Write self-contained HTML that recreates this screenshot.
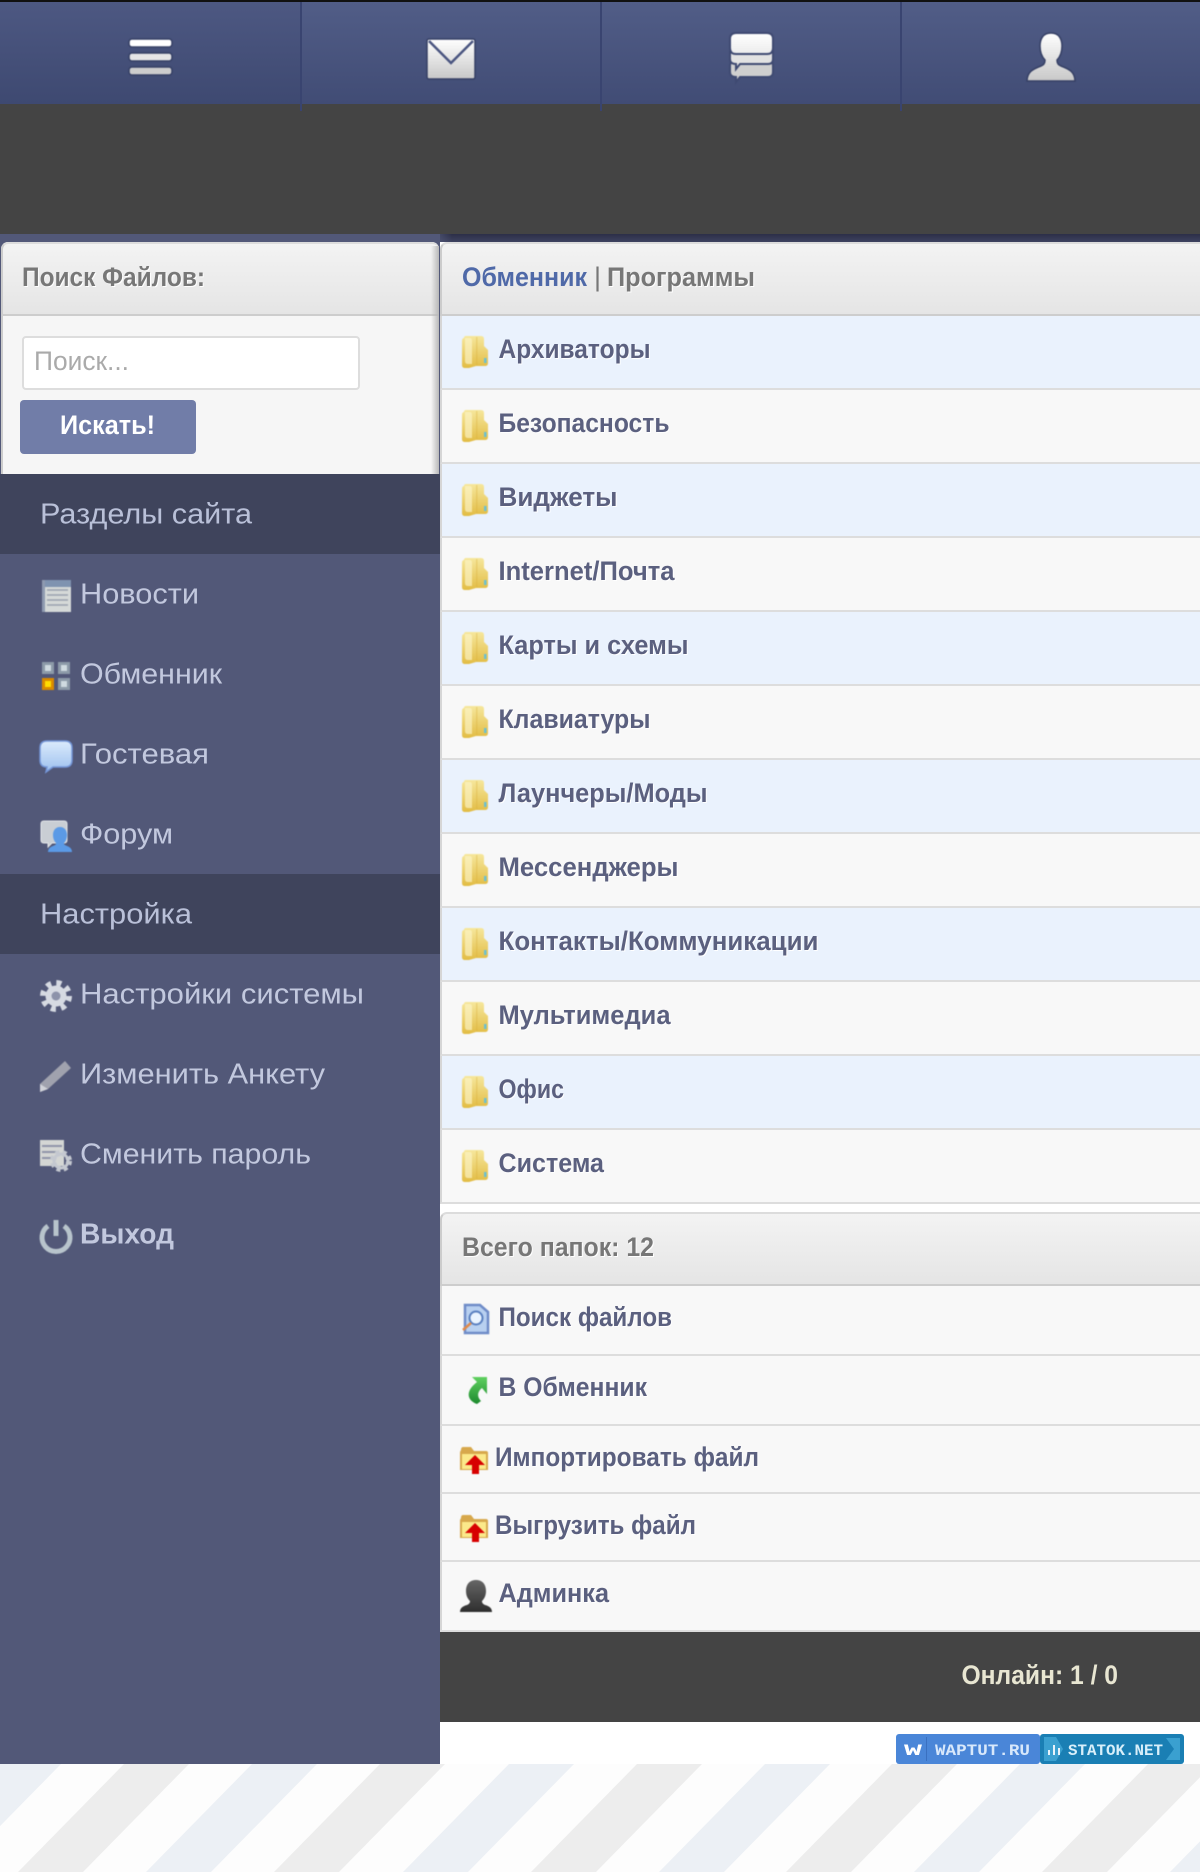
<!DOCTYPE html>
<html><head><meta charset="utf-8"><title>Обменник</title>
<style>
html,body{margin:0;padding:0;background:#fff}
#p{position:relative;width:1200px;height:1872px;overflow:hidden;background:#fff;font-family:"Liberation Sans","Noto Sans CJK SC",sans-serif}
#p div{position:absolute;box-sizing:border-box}
.hd{top:2px;height:102px;background:linear-gradient(#515d87,#414c75)}
.dv{top:2px;width:2px;height:109px;background:#394470}
.ph{background:linear-gradient(#f3f3f3,#e5e5e5);border-top:2px solid #dcdcdc;border-bottom:2px solid #cdcdcd;border-left:2px solid #ccc;border-radius:7px 0 0 0}
.r{left:440px;width:760px;border-left:2px solid #d6d6d6;border-bottom:2px solid #ddd}
.a{background:#eaf2fd}.b{background:#f8f8f8}
svg text{font-family:"Liberation Sans","Noto Sans CJK SC",sans-serif}
.m{font-size:28.5px;fill:#c2c8de}
.s{font-size:28.5px;fill:#b9c0d8}
.t{font-size:27px;font-weight:700;fill:#5b607f;text-shadow:1px 1px 0 #fff}
.g{font-size:27px;font-weight:700;fill:#777;text-shadow:1px 1px 0 #fff}
.ic{filter:blur(.55px)}
</style></head><body>
<div id="p">
<div style="left:0;top:0;width:1200px;height:2px;background:#111"></div>
<div class="hd" style="left:0;width:301px;background:linear-gradient(#4d5882,#3e4971)"></div>
<div class="hd" style="left:301px;width:300px"></div>
<div class="hd" style="left:601px;width:300px"></div>
<div class="hd" style="left:901px;width:299px"></div>
<div style="left:0;top:104px;width:1200px;height:130px;background:#444"></div>
<div class="dv" style="left:300px"></div><div class="dv" style="left:600px"></div><div class="dv" style="left:900px"></div>
<div style="left:0;top:234px;width:440px;height:1530px;background:#525878"></div>
<div style="left:440px;top:234px;width:760px;height:8px;background:linear-gradient(#2c2f48,#3e4260)"></div>
<div style="left:432px;top:234px;width:20px;height:8px;background:linear-gradient(90deg,#525878,rgba(82,88,120,0))"></div>

<div style="left:1px;top:242px;width:438px;height:232px;background:#f6f6f6;border-left:2px solid #ccc;border-radius:7px 7px 0 0"></div>
<div class="ph" style="left:1px;top:242px;width:438px;height:74px;border-radius:7px 7px 0 0"></div>
<div style="left:431px;top:246px;width:8px;height:228px;background:linear-gradient(90deg,rgba(170,170,170,0),#b8b8b8)"></div>
<div style="left:22px;top:336px;width:338px;height:54px;background:#fff;border:2px solid #ddd;border-radius:4px"></div>
<div style="left:20px;top:400px;width:176px;height:54px;background:#717da8;border-radius:4px"></div>
<div style="left:0;top:474px;width:440px;height:80px;background:#3f445c"></div>
<div style="left:0;top:874px;width:440px;height:80px;background:#3f445c"></div>

<div style="left:440px;top:242px;width:760px;height:1390px;background:#fff"></div>
<div class="ph" style="left:440px;top:242px;width:760px;height:74px"></div>
<div class="r a" style="top:316px;height:74px"></div>
<div class="r b" style="top:390px;height:74px"></div>
<div class="r a" style="top:464px;height:74px"></div>
<div class="r b" style="top:538px;height:74px"></div>
<div class="r a" style="top:612px;height:74px"></div>
<div class="r b" style="top:686px;height:74px"></div>
<div class="r a" style="top:760px;height:74px"></div>
<div class="r b" style="top:834px;height:74px"></div>
<div class="r a" style="top:908px;height:74px"></div>
<div class="r b" style="top:982px;height:74px"></div>
<div class="r a" style="top:1056px;height:74px"></div>
<div class="r b" style="top:1130px;height:74px"></div>
<div class="ph" style="left:440px;top:1212px;width:760px;height:74px"></div>
<div class="r b" style="top:1286px;height:70px"></div>
<div class="r b" style="top:1356px;height:70px"></div>
<div class="r b" style="top:1426px;height:68px"></div>
<div class="r b" style="top:1494px;height:68px"></div>
<div class="r b" style="top:1562px;height:70px;border-bottom:0"></div>
<div style="left:440px;top:1630px;width:760px;height:2px;background:#ddd"></div>
<div style="left:440px;top:1632px;width:760px;height:90px;background:#444"></div>
<div style="left:0;top:1764px;width:1200px;height:108px;background:#fdfdfd"></div>

<svg width="1200" height="1872" viewBox="0 0 1200 1872" style="position:absolute;left:0;top:0">
<defs>
<linearGradient id="w" x1="0" y1="0" x2="0" y2="1"><stop offset="0" stop-color="#fff"/><stop offset="1" stop-color="#c8c8c8"/></linearGradient>
<linearGradient id="w1" x1="0" y1="0" x2="0" y2="1"><stop offset="0" stop-color="#fff"/><stop offset="1" stop-color="#ececec"/></linearGradient>
<linearGradient id="y" x1="0" y1="0" x2="0" y2="1"><stop offset="0" stop-color="#f6e79c"/><stop offset="1" stop-color="#e2bc44"/></linearGradient>
<linearGradient id="bb" x1="0" y1="0" x2="0" y2="1"><stop offset="0" stop-color="#dcebfc"/><stop offset="1" stop-color="#9dc0ee"/></linearGradient>
<linearGradient id="gn" x1="0" y1="0" x2="0" y2="1"><stop offset="0" stop-color="#60d060"/><stop offset="1" stop-color="#1d8a2e"/></linearGradient>
<linearGradient id="dk" x1="0" y1="0" x2="0" y2="1"><stop offset="0" stop-color="#666"/><stop offset="1" stop-color="#2e2e2e"/></linearGradient>
<symbol id="fld" viewBox="0 0 26 32"><path d="M2 2Q2 0 4 0H19Q22 0 22 3V10L26 14V27Q26 30 23 30H14L7 32H3Q0 32 0 29V5Q0 2 2 2Z" fill="url(#y)"/><path d="M3 2H8Q10 2 10 5V28H6Q3 28 3 25Z" fill="#fcf5c8" opacity=".65"/><path d="M14 1H15.5V29H14Z" fill="#d9ae3c" opacity=".35"/><rect x="22" y="22" width="2.5" height="5" fill="#6cc0d0"/></symbol>
<symbol id="upf" viewBox="0 0 28 28"><path d="M1 4Q1 1 3 1H11L14 5H26Q28 5 28 7V24H0V6Z" fill="#d7a84c"/><rect x="2" y="8" width="24" height="15" fill="#fbe98a"/><path d="M14 9L24 19H18V28H11V19H4Z" fill="#d70000" transform="translate(1 0)"/></symbol>
</defs>

<!-- stripes -->
<g fill="#ededed"><path d="M124 1764h65l-106 108h-65zM380 1764h65l-106 108h-65zM637 1764h65l-106 108h-65zM892 1764h65l-106 108h-65zM1148 1764h65l-106 108h-65z"/></g>
<g fill="#ecf0f5"><path d="M-4 1764h65l-106 108h-65zM252 1764h65l-106 108h-65zM509 1764h65l-106 108h-65zM765 1764h65l-106 108h-65zM1020 1764h65l-106 108h-65zM1276 1764h65l-106 108h-65z"/></g>

<!-- header icons -->
<g class="ic" fill="url(#w)" stroke="#364065" stroke-width="1.5">
<rect x="129" y="39" width="43" height="8" rx="3" fill="#fff"/><rect x="129" y="53" width="43" height="8" rx="3" fill="#e6e6e6"/><rect x="129" y="67" width="43" height="8" rx="3" fill="#cdcdcd"/>
<rect x="427" y="39" width="48" height="40" rx="2"/>
<path d="M429 41L451 63L473 41" fill="none" stroke="#4a5580" stroke-width="2.5"/>
<path d="M735 61h33q5 0 5 5v6q0 5-5 5H740l-4 5v-5q-6 0-6-5v-6q0-5 5-5Z" fill="#cfcfcf" stroke="#3f4a72" stroke-width="2"/>
<path d="M735 48h33q5 0 5 5v6q0 5-5 5H740l-4 5v-5q-6 0-6-5v-6q0-5 5-5Z" fill="#e2e2e2" stroke="#3f4a72" stroke-width="2"/>
<path d="M736 33h31q6 0 6 6v9q0 6-6 6H736q-6 0-6-6v-9q0-6 6-6Z" fill="url(#w1)" stroke="#3f4a72" stroke-width="2"/>
<path d="M1051 33c8 0 11 6 11 13 0 6-2 11-5 14 0 3 1 5 4 6 8 3 14 6 14 15h-48c0-9 6-12 14-15 3-1 4-3 4-6-3-3-5-8-5-14 0-7 3-13 11-13Z"/>
</g>

<!-- sidebar icons -->
<g class="ic">
<rect x="42" y="580" width="29" height="32" fill="#d5d9d8"/><rect x="42" y="580" width="29" height="7" fill="#7f93b0"/><rect x="42" y="580" width="3" height="32" fill="#8e9ab0"/>
<path d="M47 590h21M47 595h21M47 600h21M47 605h21" stroke="#9aa2ae" stroke-width="1.500"/>
<g fill="#8c9aa8"><rect x="42" y="662" width="12" height="12"/><rect x="58" y="662" width="12" height="12"/><rect x="58" y="678" width="12" height="12"/></g>
<g fill="#cfdae0"><rect x="45" y="665" width="6" height="6"/><rect x="61" y="665" width="6" height="6"/><rect x="61" y="681" width="6" height="6"/></g>
<rect x="42" y="678" width="12" height="12" fill="#d98a00"/><rect x="45" y="681" width="6" height="6" fill="#ffdc00"/>
<path d="M47 741h18q7 0 7 7v12q0 7-7 7H53l-7 5 1-5q-7 0-7-7v-12q0-7 7-7Z" fill="url(#bb)" stroke="#7496d8" stroke-width="1.500"/>
<path d="M44 821h20q3 0 3 3v16q0 3-3 3H52l-4 4v-4h-4q-3 0-3-3v-16q0-3 3-3Z" fill="#c9ced4" stroke="#e2e5e8"/>
<path d="M60 827c5 0 7 4 7 8 0 3-1 6-3 8 0 2 1 2 3 3 3 1 5 3 5 6H48c0-3 2-5 5-6 2-1 3-1 3-3-2-2-3-5-3-8 0-4 2-8 7-8Z" fill="#5b9ae6"/>
<circle cx="56" cy="996" r="10.500" fill="#d6dae2"/><circle cx="56" cy="996" r="13" fill="none" stroke="#d6dae2" stroke-width="6" stroke-dasharray="5 5.200"/><circle cx="56" cy="996" r="4.500" fill="#8d93aa"/>
<path d="M65 1061L71 1068 48 1089 40 1092V1084Z" fill="#a0a2ae"/><path d="M40 1084L48 1089 40 1092Z" fill="#d0d2d8"/>
<rect x="40" y="1140" width="24" height="26" fill="#d4d6d4"/><path d="M42 1146h20M42 1152h16M42 1158h12" stroke="#8f95a8" stroke-width="2"/>
<circle cx="61" cy="1161" r="8" fill="none" stroke="#c4c8d0" stroke-width="6" stroke-dasharray="3.500 3"/><circle cx="61" cy="1161" r="7" fill="none" stroke="#c4c8d0" stroke-width="3"/>
<path d="M48 1226a14 14 0 1 0 16 0" fill="none" stroke="#b8c4cc" stroke-width="5"/><path d="M56 1220v16" stroke="#b8c4cc" stroke-width="5"/>
</g>

<!-- folder icons -->
<g class="ic">
<use href="#fld" x="462" y="336" width="26" height="32"/><use href="#fld" x="462" y="410" width="26" height="32"/><use href="#fld" x="462" y="484" width="26" height="32"/><use href="#fld" x="462" y="558" width="26" height="32"/><use href="#fld" x="462" y="632" width="26" height="32"/><use href="#fld" x="462" y="706" width="26" height="32"/><use href="#fld" x="462" y="780" width="26" height="32"/><use href="#fld" x="462" y="854" width="26" height="32"/><use href="#fld" x="462" y="928" width="26" height="32"/><use href="#fld" x="462" y="1002" width="26" height="32"/><use href="#fld" x="462" y="1076" width="26" height="32"/><use href="#fld" x="462" y="1150" width="26" height="32"/>

<!-- lower icons -->
<path d="M465 1305h15l8 7v21h-23Z" fill="#b8d0f0" stroke="#6f8cc8" stroke-width="2.500"/><circle cx="476" cy="1318" r="6.500" fill="#eaf4ff" stroke="#5a80c0" stroke-width="2"/><path d="M471 1323l-8 7" stroke="#e08a4a" stroke-width="2.500"/>
<path d="M472 1377H487V1394L482 1388C477 1392 477 1397 481 1401L477 1404C468 1401 464 1392 477 1382Z" fill="url(#gn)"/>
<use href="#upf" x="460" y="1446" width="28" height="28"/><use href="#upf" x="460" y="1514" width="28" height="28"/>
<path d="M476 1580c7 0 10 5 10 11 0 5-2 8-4 10 0 2 1 3 3 4 4 1 7 3 7 7H460c0-4 3-6 7-7 2-1 3-2 3-4-2-2-4-5-4-10 0-6 3-11 10-11Z" fill="url(#dk)"/>
</g>

<!-- badges -->
<rect x="896" y="1734" width="144" height="30" rx="3" fill="#4a86d8"/><rect x="926" y="1737" width="1" height="24" fill="#3a70c0"/>
<rect x="1040" y="1734" width="144" height="30" rx="3" fill="#1a7fb4"/><path d="M1044 1737h12l7 12-7 12h-12ZM1166 1738h14v22h-14l8-11Z" fill="#3aa0d0"/>
<text x="904" y="1755" font-size="16" font-weight="700" fill="#fff" textLength="18" lengthAdjust="spacingAndGlyphs" style="font-family:'Liberation Mono',monospace">W</text>
<text x="935" y="1755" font-size="16" font-weight="700" fill="#d8e8fb" textLength="95" lengthAdjust="spacingAndGlyphs" style="font-family:'Liberation Mono',monospace">WAPTUT.RU</text>
<path d="M1049 1755v-5M1054 1755v-10M1059 1755v-7" stroke="#e6f2fa" stroke-width="2"/>
<text x="1068" y="1755" font-size="16" font-weight="700" fill="#d8effa" textLength="95" lengthAdjust="spacingAndGlyphs" style="font-family:'Liberation Mono',monospace">STATOK.NET</text>

<!-- text -->
<text class="g" x="22" y="286" textLength="183" lengthAdjust="spacingAndGlyphs">Поиск Файлов:</text>
<text x="34" y="370" font-size="27" fill="#aaa" textLength="95" lengthAdjust="spacingAndGlyphs">Поиск...</text>
<text x="60" y="434" font-size="27" font-weight="700" fill="#fff" textLength="95" lengthAdjust="spacingAndGlyphs">Искать!</text>
<text class="s" x="40" y="523.500" textLength="212" lengthAdjust="spacingAndGlyphs">Разделы сайта</text>
<text class="m" x="80" y="603.500" textLength="119" lengthAdjust="spacingAndGlyphs">Новости</text>
<text class="m" x="80" y="683.500" textLength="142" lengthAdjust="spacingAndGlyphs">Обменник</text>
<text class="m" x="80" y="763.500" textLength="129" lengthAdjust="spacingAndGlyphs">Гостевая</text>
<text class="m" x="80" y="843.500" textLength="93" lengthAdjust="spacingAndGlyphs">Форум</text>
<text class="s" x="40" y="923.500" textLength="152" lengthAdjust="spacingAndGlyphs">Настройка</text>
<text class="m" x="80" y="1003.500" textLength="284" lengthAdjust="spacingAndGlyphs">Настройки системы</text>
<text class="m" x="80" y="1083.500" textLength="245" lengthAdjust="spacingAndGlyphs">Изменить Анкету</text>
<text class="m" x="80" y="1163.500" textLength="231" lengthAdjust="spacingAndGlyphs">Сменить пароль</text>
<text class="m" x="80" y="1243.500" textLength="94" lengthAdjust="spacingAndGlyphs" style="font-weight:700">Выход</text>

<text x="462" y="286" font-size="27" font-weight="700" fill="#4f69a8" textLength="125" lengthAdjust="spacingAndGlyphs">Обменник</text>
<text x="594" y="286" font-size="27" fill="#777">|</text>
<text class="g" x="607" y="286" textLength="148" lengthAdjust="spacingAndGlyphs">Программы</text>
<text class="t" x="498.500" y="358" textLength="152" lengthAdjust="spacingAndGlyphs">Архиваторы</text>
<text class="t" x="498.500" y="432" textLength="171" lengthAdjust="spacingAndGlyphs">Безопасность</text>
<text class="t" x="498.500" y="506" textLength="119" lengthAdjust="spacingAndGlyphs">Виджеты</text>
<text class="t" x="498.500" y="580" textLength="176" lengthAdjust="spacingAndGlyphs">Internet/Почта</text>
<text class="t" x="498.500" y="654" textLength="190" lengthAdjust="spacingAndGlyphs">Карты и схемы</text>
<text class="t" x="498.500" y="728" textLength="152" lengthAdjust="spacingAndGlyphs">Клавиатуры</text>
<text class="t" x="498.500" y="802" textLength="209" lengthAdjust="spacingAndGlyphs">Лаунчеры/Моды</text>
<text class="t" x="498.500" y="876" textLength="180" lengthAdjust="spacingAndGlyphs">Мессенджеры</text>
<text class="t" x="498.500" y="950" textLength="320" lengthAdjust="spacingAndGlyphs">Контакты/Коммуникации</text>
<text class="t" x="498.500" y="1024" textLength="172" lengthAdjust="spacingAndGlyphs">Мультимедиа</text>
<text class="t" x="498.500" y="1098" textLength="65.500" lengthAdjust="spacingAndGlyphs">Офис</text>
<text class="t" x="498.500" y="1172" textLength="105.500" lengthAdjust="spacingAndGlyphs">Система</text>
<text class="g" x="462" y="1256" textLength="192" lengthAdjust="spacingAndGlyphs">Всего папок: 12</text>
<text class="t" x="498.500" y="1326" textLength="173.500" lengthAdjust="spacingAndGlyphs">Поиск файлов</text>
<text class="t" x="498.500" y="1396" textLength="148.500" lengthAdjust="spacingAndGlyphs">В Обменник</text>
<text class="t" x="495" y="1466" textLength="264" lengthAdjust="spacingAndGlyphs">Импортировать файл</text>
<text class="t" x="495" y="1534" textLength="201" lengthAdjust="spacingAndGlyphs">Выгрузить файл</text>
<text class="t" x="498.500" y="1602" textLength="110.500" lengthAdjust="spacingAndGlyphs">Админка</text>
<text x="961.500" y="1684" font-size="27" font-weight="700" fill="#e8e6d2" textLength="156.500" lengthAdjust="spacingAndGlyphs">Онлайн: 1 / 0</text>
</svg>
</div>
</body></html>
